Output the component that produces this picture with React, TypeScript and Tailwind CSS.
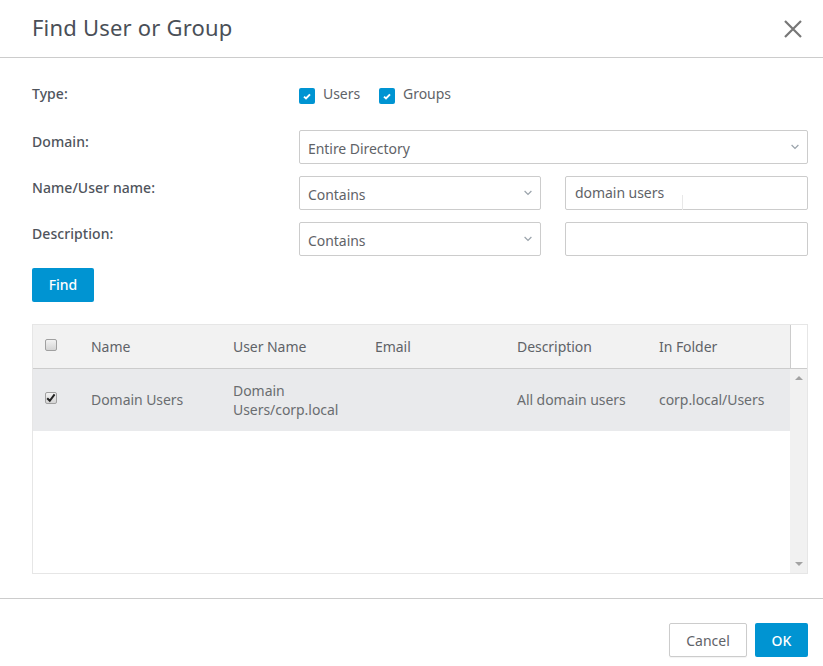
import React from "react";

const sans = "font-['Open_Sans',sans-serif]";

function Chevron({ className = "" }: { className?: string }) {
  return (
    <svg width="8" height="6" viewBox="0 0 8 6" className={className} fill="none">
      <path d="M0.6 1 L4 4.4 L7.4 1" stroke="#9aa3ab" strokeWidth="1.2" />
    </svg>
  );
}

function BlueCheck() {
  return (
    <span className="flex h-4 w-4 items-center justify-center rounded-[2px] bg-[#0094d2]">
      <svg width="8" height="7" viewBox="0 0 8 7" fill="none">
        <path d="M1 3.6 L3 5.5 L7 1.3" stroke="#fff" strokeWidth="1.9" />
      </svg>
    </span>
  );
}

function Select({ label, className = "" }: { label: string; className?: string }) {
  return (
    <div className={`flex h-[34px] items-center justify-between rounded-[2px] border border-[#cccccc] bg-white pl-[8px] pr-[8px] ${className}`}>
      <span className="relative top-[1px] text-[14px] tracking-[-0.05px] text-[#5f6368]">{label}</span>
      <Chevron />
    </div>
  );
}

function Label({ children, className = "" }: { children: React.ReactNode; className?: string }) {
  return <div className={`text-[14px] font-medium leading-[20px] tracking-[0.06px] text-[#4f545c] ${className}`}>{children}</div>;
}

function GrayBox({ checked }: { checked?: boolean }) {
  return (
    <span className="relative block h-[12px] w-[12px] rounded-[2px] border border-[#a0a0a0] bg-[linear-gradient(#f2f2f2,#d4d4d4)]">
      {checked && (
        <svg width="10" height="10" viewBox="0 0 10 10" className="absolute left-0 top-0" fill="none">
          <path d="M1.2 5.2 L3.8 7.8 L8.6 1.4" stroke="#222" strokeWidth="2" />
        </svg>
      )}
    </span>
  );
}

const cols = ["w-[142px]", "w-[142px]", "w-[142px]", "w-[142px]", "w-[131px]"];

export default function App() {
  return (
    <div className={`flex h-[666px] w-[823px] flex-col overflow-hidden bg-white ${sans}`}>
      <header className="flex h-[58px] shrink-0 items-center justify-between border-b border-[#cccccc] pl-[32px] pr-[21px]">
        <h1 className="relative -top-[2px] font-['Lato',sans-serif] text-[22px] leading-[32px] tracking-[0.2px] text-[#4a4f57]">
          Find User or Group
        </h1>
        <svg width="18" height="18" viewBox="0 0 18 18" fill="none">
          <path d="M1 1 L17 17 M17 1 L1 17" stroke="#777777" strokeWidth="2.2" />
        </svg>
      </header>

      <main className="flex flex-1 flex-col pl-[32px] pr-[15px]">
        <div className="mt-[26px] grid grid-cols-[267px_242px_243px]">
          <Label className="h-[20px]">Type:</Label>
          <div className="col-span-2 flex h-[20px] items-center text-[14px] tracking-[-0.05px] text-[#5f6368]">
            <span className="relative top-[2px]"><BlueCheck /></span>
            <span className="relative -top-[1px] ml-[8px] mr-[19px]">Users</span>
            <span className="relative top-[2px]"><BlueCheck /></span>
            <span className="relative -top-[1px] ml-[8px]">Groups</span>
          </div>
        </div>

        <div className="mt-[26px] grid grid-cols-[267px_242px_24px_243px] gap-y-[12px]">
          <Label className="mt-[2px]">Domain:</Label>
          <Select label="Entire Directory" className="col-span-3" />

          <Label className="mt-[2px]">Name/User name:</Label>
          <Select label="Contains" />
          <div />
          <div className="relative flex h-[34px] items-center rounded-[2px] border border-[#cccccc] pl-[9px] pb-[2px] text-[14px] tracking-[-0.05px] text-[#5f6368]">
            domain users
            <span className="absolute left-[116px] top-[18px] h-[15px] w-px bg-[#e8e8e8]" />
          </div>

          <Label className="mt-[2px]">Description:</Label>
          <Select label="Contains" />
          <div />
          <div className="h-[34px] rounded-[2px] border border-[#cccccc]" />
        </div>

        <button className="mt-[12px] h-[34px] w-[62px] rounded-[2px] bg-[#0094d2] pb-[2px] text-[14px] font-medium text-white">
          Find
        </button>

        <div className="mt-[22px] flex h-[250px] w-[776px] flex-col border border-[#e6e6e6]">
          <div className="flex h-[44px] shrink-0 border-b border-[#cccccc]">
            <div className="flex w-[757px] items-center bg-[#f2f2f2] text-[14px] tracking-[-0.05px] text-[#5f6368]">
              <div className="relative -top-[2px] flex w-[58px] justify-start pl-[12px]"><GrayBox /></div>
              {["Name", "User Name", "Email", "Description", "In Folder"].map((h, i) => (
                <div key={h} className={cols[i]}>{h}</div>
              ))}
            </div>
            <div className="w-[18px] border-l border-[#cccccc] bg-white" />
          </div>
          <div className="flex min-h-0 flex-1">
            <div className="w-[757px]">
              <div className="flex h-[62px] items-center bg-[#e9eaec] text-[14px] leading-[19px] tracking-[-0.05px] text-[#6a6d70]">
                <div className="relative -top-[2px] w-[58px] pl-[12px]"><GrayBox checked /></div>
                <div className={`${cols[0]} pb-[2px]`}>Domain Users</div>
                <div className={`${cols[1]} pr-[20px]`}>Domain Users/corp.local</div>
                <div className={cols[2]} />
                <div className={`${cols[3]} pb-[2px]`}>All domain users</div>
                <div className={`${cols[4]} pb-[2px]`}>corp.local/Users</div>
              </div>
            </div>
            <div className="flex w-[18px] flex-col items-center justify-between bg-[#f1f1f1] py-[7px]">
              <svg width="8" height="4" viewBox="0 0 8 4"><path d="M4 0 L8 4 L0 4 Z" fill="#a3a3a3" /></svg>
              <svg width="8" height="4" viewBox="0 0 8 4"><path d="M0 0 L8 0 L4 4 Z" fill="#a3a3a3" /></svg>
            </div>
          </div>
        </div>
      </main>

      <footer className="flex h-[68px] shrink-0 items-start justify-end gap-[8px] border-t border-[#cccccc] pr-[15px] pt-[24px]">
        <button className="h-[34px] w-[78px] rounded-[2px] border border-[#cccccc] bg-white text-[14px] text-[#5f6368] shadow-[0_1px_1px_rgba(0,0,0,0.05)]">
          Cancel
        </button>
        <button className="h-[34px] w-[53px] rounded-[2px] bg-[#0094d2] text-[14px] font-medium text-white">
          OK
        </button>
      </footer>
    </div>
  );
}
